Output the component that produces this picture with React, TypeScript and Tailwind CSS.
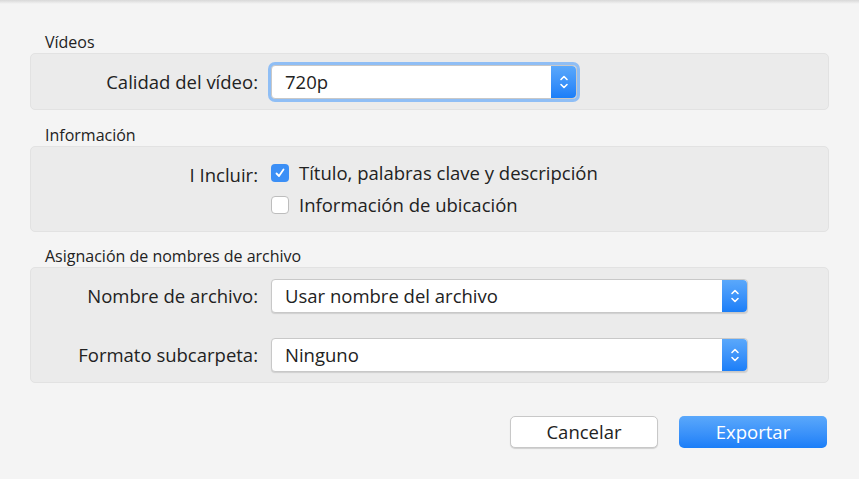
import React from "react";

const Arrows = () => (
  <div className="w-[25px] self-stretch bg-gradient-to-b from-[#5aa8fb] to-[#1a7ef8] rounded-r-[4px] flex items-center justify-center">
    <svg width="10" height="18" viewBox="0 0 10 18" fill="none" stroke="white" strokeWidth="1.6" strokeLinecap="round" strokeLinejoin="round">
      <path d="M2 6.5 L5 3.5 L8 6.5" />
      <path d="M2 11.5 L5 14.5 L8 11.5" />
    </svg>
  </div>
);

const Select = ({ value, w, focus }: { value: string; w: string; focus?: boolean }) => (
  <div className={`${w} h-[34px] flex bg-white rounded-[4px] border border-[#c8c8c8] shadow-[0_1px_1px_rgba(0,0,0,0.12)] ${focus ? "ring-[3px] ring-[#8fbef5]" : ""}`}>
    <div className="flex-1 flex items-center pl-[13px] text-[18.5px] text-[#222]">{value}</div>
    <Arrows />
  </div>
);

const Label = ({ children }: { children: React.ReactNode }) => (
  <div className="w-[240px] pr-[13px] text-right text-[18.5px] text-[#222] shrink-0">{children}</div>
);

export default function App() {
  return (
    <div className="w-[859px] h-[479px] bg-[#f4f4f4] relative" style={{ fontFamily: '"Open Sans", Arial, sans-serif' }}>
      <div className="h-[4px] bg-gradient-to-b from-[#d8d8d8] to-[#f4f4f4]" />
      <div className="px-[30px] pt-[27px]">
        <div className="pl-[15px] text-[16px] leading-[22px] text-[#222] h-[22px]">Vídeos</div>
        <div className="bg-[#ebebeb] rounded-[5px] border border-[#e2e2e2] h-[57px] flex items-center">
          <Label>Calidad del vídeo:</Label>
          <Select value="720p" w="w-[306px]" focus />
        </div>
        <div className="pl-[15px] text-[16px] leading-[22px] text-[#222] mt-[14px] h-[22px]">Información</div>
        <div className="bg-[#ebebeb] rounded-[5px] border border-[#e2e2e2] h-[86px] flex pt-[14px]">
          <Label><span className="leading-[24px]">I Incluir:</span></Label>
          <div className="flex flex-col gap-[8px]">
            <div className="flex items-center gap-[10px] h-[24px] text-[18.5px] text-[#222]">
              <div className="w-[18px] h-[18px] rounded-[4px] bg-[#3b8ff6] flex items-center justify-center">
                <svg width="12" height="12" viewBox="0 0 12 12" fill="none" stroke="white" strokeWidth="1.8" strokeLinecap="round" strokeLinejoin="round"><path d="M2.5 6.5 L5 9 L9.5 2.5" /></svg>
              </div>
              Título, palabras clave y descripción
            </div>
            <div className="flex items-center gap-[10px] h-[24px] text-[18.5px] text-[#222]">
              <div className="w-[18px] h-[18px] rounded-[4px] bg-white border border-[#bdbdbd]" />
              Información de ubicación
            </div>
          </div>
        </div>
        <div className="pl-[15px] text-[16px] leading-[22px] text-[#222] mt-[13px] h-[22px]">Asignación de nombres de archivo</div>
        <div className="bg-[#ebebeb] rounded-[5px] border border-[#e2e2e2] h-[116px] flex flex-col pt-[11px] gap-[25px]">
          <div className="flex items-center">
            <Label>Nombre de archivo:</Label>
            <Select value="Usar nombre del archivo" w="w-[477px]" />
          </div>
          <div className="flex items-center">
            <Label>Formato subcarpeta:</Label>
            <Select value="Ninguno" w="w-[477px]" />
          </div>
        </div>
        <div className="flex justify-end gap-[21px] mt-[33px] pr-[2px]">
          <button className="w-[148px] h-[32px] bg-white rounded-[5px] border border-[#c8c8c8] shadow-[0_1px_1px_rgba(0,0,0,0.15)] text-[18.5px] text-[#222]">Cancelar</button>
          <button className="w-[148px] h-[32px] rounded-[5px] bg-gradient-to-b from-[#5aa8fb] to-[#1a7ef8] text-[18.5px] text-white">Exportar</button>
        </div>
      </div>
    </div>
  );
}
